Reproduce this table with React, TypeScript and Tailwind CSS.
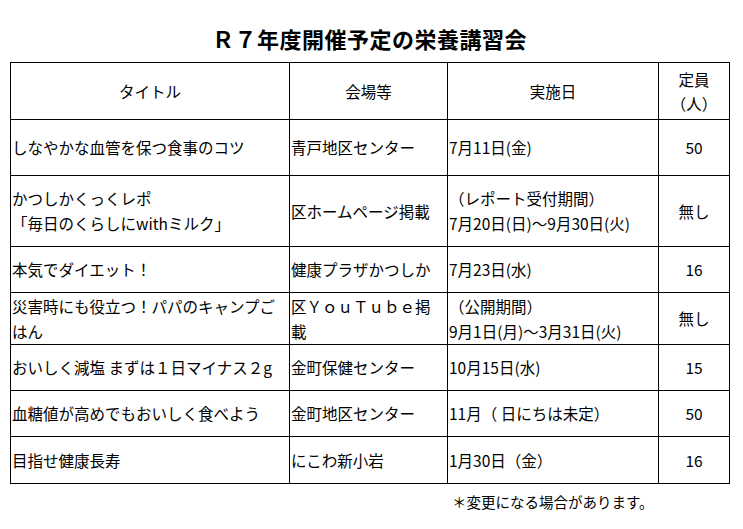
const rows: { title: React.ReactNode; place: React.ReactNode; date: React.ReactNode; cap: string; h: string }[] = [
  { title: "しなやかな血管を保つ食事のコツ", place: "青戸地区センター", date: "7月11日(金)", cap: "50", h: "h-[56px]" },
  {
    title: (
      <>
        かつしかくっくレポ
        <br />
        「毎日のくらしにwithミルク」
      </>
    ),
    place: "区ホームページ掲載",
    date: (
      <>
        （レポート受付期間）
        <br />
        7月20日(日)～9月30日(火)
      </>
    ),
    cap: "無し",
    h: "h-[71px]",
  },
  { title: "本気でダイエット！", place: "健康プラザかつしか", date: "7月23日(水)", cap: "16", h: "h-[46px]" },
  {
    title: (
      <>
        災害時にも役立つ！パパのキャンプご
        <br />
        はん
      </>
    ),
    place: (
      <>
        区ＹｏｕＴｕｂｅ掲
        <br />
        載
      </>
    ),
    date: (
      <>
        （公開期間）
        <br />
        9月1日(月)～3月31日(火)
      </>
    ),
    cap: "無し",
    h: "h-[52px]",
  },
  { title: "おいしく減塩 まずは１日マイナス２g", place: "金町保健センター", date: "10月15日(水)", cap: "15", h: "h-[46px]" },
  { title: "血糖値が高めでもおいしく食べよう", place: "金町地区センター", date: "11月（ 日にちは未定）", cap: "50", h: "h-[46px]" },
  { title: "目指せ健康長寿", place: "にこわ新小岩", date: "1月30日（金）", cap: "16", h: "h-[47px]" },
];

export default function App() {
  return (
    <div className="w-[743px] h-[529px] bg-white text-black font-['Noto_Sans_CJK_JP',sans-serif]">
      {/* title */}
      <div className="pt-[23px] pb-[8px] pl-[10px] w-[729px]">
        <h1 className="text-center text-[22px] font-bold leading-[31px] tracking-[0.5px]">
          Ｒ７年度開催予定の栄養講習会
        </h1>
      </div>

      <div className="pl-[10px]">
        <table className="table-fixed border-collapse w-[719px] text-[15.5px] leading-[25px]">
          <colgroup>
            <col className="w-[279px]" />
            <col className="w-[158px]" />
            <col className="w-[211px]" />
            <col className="w-[71px]" />
          </colgroup>
          <thead>
            <tr className="h-[57px]">
              <th className="border border-black font-normal text-center">タイトル</th>
              <th className="border border-black font-normal text-center">会場等</th>
              <th className="border border-black font-normal text-center">実施日</th>
              <th className="border border-black font-normal text-center leading-[24px]">
                定員
                <br />
                （人）
              </th>
            </tr>
          </thead>
          <tbody>
            {rows.map((r, i) => (
              <tr key={i} className={r.h}>
                <td className="border border-black pl-[1px] align-middle whitespace-nowrap">{r.title}</td>
                <td className="border border-black pl-[1px] align-middle whitespace-nowrap">{r.place}</td>
                <td className="border border-black pl-[1px] align-middle whitespace-nowrap">{r.date}</td>
                <td className="border border-black text-center align-middle">{r.cap}</td>
              </tr>
            ))}
          </tbody>
        </table>
      </div>

      <div className="pl-[452px] pt-[8px] text-[14.5px] leading-[20px]">＊変更になる場合があります。</div>
    </div>
  );
}
